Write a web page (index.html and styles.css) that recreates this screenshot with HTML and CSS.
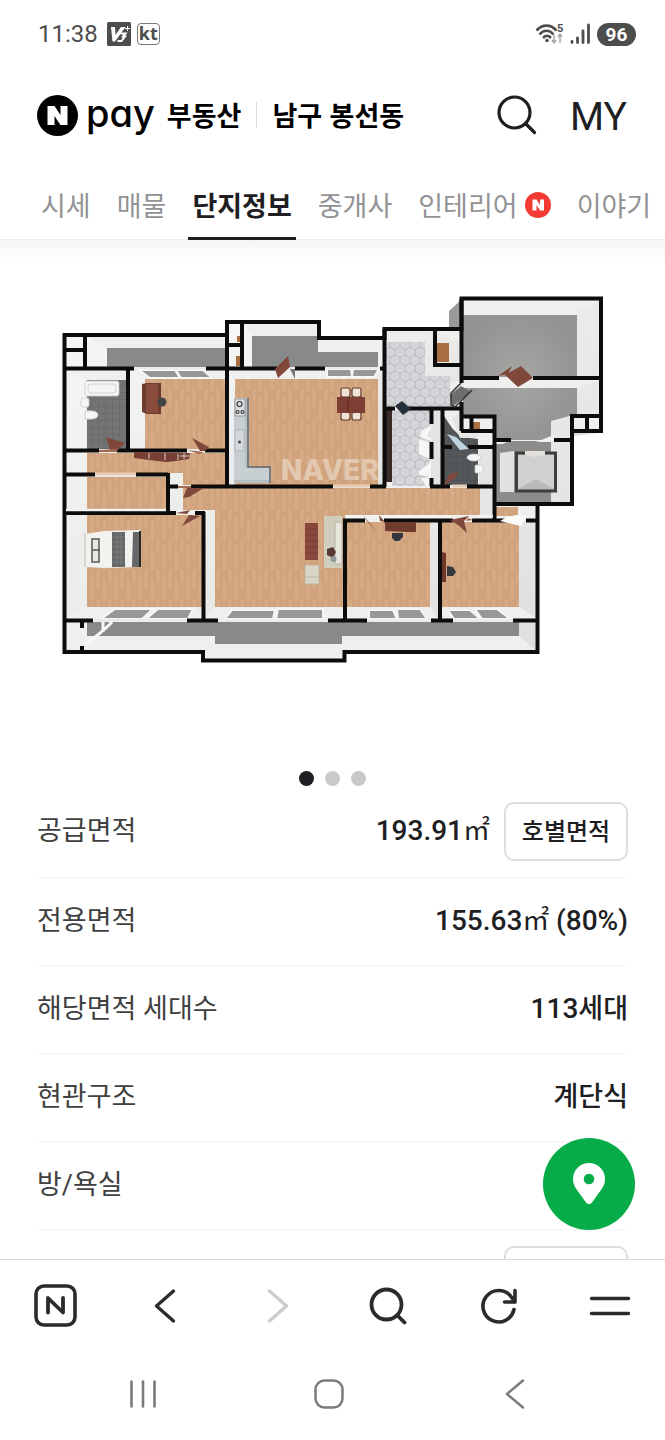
FILE: index.html
```html
<!DOCTYPE html>
<html lang="ko">
<head>
  <meta charset="UTF-8">
  <meta name="viewport" content="width=device-width, initial-scale=1.0">
  <title>Npay 부동산 - 남구 봉선동</title>
  <link rel="stylesheet" href="styles.css">
</head>
<body>
<div class="status-bar">
  <span class="clock">11:38</span>
  <svg class="app-icon" width="24" height="24" viewBox="0 0 24 24" aria-hidden="true">
    <rect width="24" height="24" rx="1.500" fill="#4d4d4d"/>
    <path d="M4 5h4l.5 8L14 5h4.500L8 19.500H5.500z" fill="#fff"/>
    <path d="M13.500 11.500h5L16 14.500h2l-3.500 4.500H10.500" fill="none" stroke="#fff" stroke-width="2"/>
    <path d="M20.500 4v5M18 6.500h5" stroke="#fff" stroke-width="1"/>
  </svg>
  <span class="carrier">kt</span>
  <div class="status-right">
    <svg width="30" height="28" viewBox="0 -2 30 28" aria-hidden="true">
      <g fill="none" stroke="#4d4d4d" stroke-width="2.600">
        <path d="M1.500 8.500c6-6.500 14-6.500 20 0M4.500 12.500c4-5 10-5 14 0M8 16c3-3 5-3 8 0"/>
      </g>
      <circle cx="12" cy="18.500" r="1.800" fill="#4d4d4d"/>
      <path d="M19 13v7M17 18l2 3 2-3M25 21v-8M23 15l2-3 2 3" fill="none" stroke="#aaa" stroke-width="1.500"/>
      <text x="22" y="10" class="wifi-gen">5</text>
    </svg>
    <svg class="signal" width="20" height="24" viewBox="0 0 20 24" aria-hidden="true">
      <path d="M2 19.500v1M7.500 16v4.500M13 9v11.500M18.500 3v17.500" stroke="#4d4d4d" stroke-width="2.800" stroke-linecap="round"/>
    </svg>
    <span class="battery">96</span>
  </div>
</div>

<header class="header">
  <a class="logo" href="#">
    <svg width="41" height="41" viewBox="0 0 41 41" aria-hidden="true">
      <circle cx="20.500" cy="20.500" r="20.500" fill="#000"/>
      <path d="M10.500 11h7l6 9v-9h7v19h-7l-6-9v9h-7z" fill="#fff"/>
    </svg>
    <span class="logo-pay">pay</span>
    <span class="logo-name">부동산</span>
  </a>
  <a class="region" href="#">남구 봉선동</a>
  <button class="icon-button header-search" type="button" aria-label="검색">
    <svg width="40" height="40" viewBox="0 0 40 40" fill="none" stroke="#1e1e23" stroke-width="3.200" stroke-linecap="round">
      <circle cx="17.500" cy="17.500" r="15.500"/>
      <path d="M28.500 28.500l9 9"/>
    </svg>
  </button>
  <a class="my" href="#">MY</a>
</header>

<nav class="tabs">
  <a href="#">시세</a>
  <a href="#">매물</a>
  <a href="#" class="active">단지정보</a>
  <a href="#">중개사</a>
  <a href="#">인테리어
    <svg class="new-badge" width="26" height="26" viewBox="0 0 26 26" aria-hidden="true">
      <circle cx="13" cy="13" r="13" fill="#f23a32"/>
      <path d="M7.500 7.500h4l3.500 5.500V7.500h4v11h-4L11.500 13v5.500h-4z" fill="#fff"/>
    </svg>
  </a>
  <a href="#">이야기</a>
</nav>

<div class="content-wrap">
<main class="content">
  <svg class="floor-plan" viewBox="0 240 665 524" role="img" aria-label="평면도">
    <defs>
      <pattern id="wood" width="24" height="30" patternUnits="userSpaceOnUse">
        <rect width="24" height="30" fill="#d1a47d"/>
        <path d="M2 0v18M8 10v20M14 0v12M20 6v24" stroke="#d6ab85" stroke-width="3"/>
        <path d="M5 4v20M11 0v9M17 14v16M23 0v20" stroke="#caa078" stroke-width="0.800"/>
      </pattern>
      <pattern id="hex" width="10" height="16" patternUnits="userSpaceOnUse">
        <rect width="10" height="16" fill="#d3d5d8"/>
        <path d="M5 0v3L0 6v5l5 3v2M5 3l5 3v5l-5 3" fill="none" stroke="#b3b6ba" stroke-width="0.900"/>
      </pattern>
      <pattern id="tile" width="7" height="7" patternUnits="userSpaceOnUse">
        <rect width="7" height="7" fill="#727476"/>
        <path d="M0 0h7M0 0v7" stroke="#626466" stroke-width="1"/>
      </pattern>
      <pattern id="darkTile" width="6" height="6" patternUnits="userSpaceOnUse">
        <rect width="6" height="6" fill="#54585a"/>
        <path d="M0 0h6M0 0v6" stroke="#484c4e" stroke-width="1"/>
      </pattern>
      <linearGradient id="wall" x1="0" y1="0" x2="1" y2="1">
        <stop offset="0" stop-color="#f7f7f6"/>
        <stop offset="1" stop-color="#dededc"/>
      </linearGradient>
      <radialGradient id="concrete">
        <stop offset="0" stop-color="#a6a6a4"/>
        <stop offset="1" stop-color="#949492"/>
      </radialGradient>
      <clipPath id="kitchenClip"><rect x="229" y="370" width="154" height="115"/></clipPath>
    </defs>

    <!-- 벽 안쪽 면 -->
    <path d="M64 335H227V322H319V338H384V329H461V299H601V431H572V504H537V652H345V660H203V652H64Z" fill="#efefed"/>
    <path d="M461 300L449 311V329H461Z" fill="#9a9a98"/>
    <path d="M572 433H598L574 436V440Z" fill="#ddd"/>
    <g fill="url(#wall)">
      <path d="M66 337h18v12H66zM66 352h18v15H66zM87 337L107 348V366H87zM66 370L87 380V448H66zM130 370l15 9v70h-15zM66 453h21v20H66zM66 477h21v32H66zM66 515h21v92l-21 11zM205 510h10v97l-10 8zM170 473h13v37h-13zM430 521h8v97l-8-11zM519 521h17v97l-17-11zM480 488h12v27h-12zM577 312l23-11v76h-23zM577 388l23-8v35h-23zM550 420l22-6v24h-22zM551 442h19v60h-19zM519 622h16v28l-16-14z"/>
      <path d="M229 324h12v19h-12zM229 347h12v20h-12zM244 324l8 12v31h-8zM229 370l6 9v105h-6zM378 379l5-8v115h-5zM386 331h48v11h-48zM425 342h10v24h25v13l-10 6v-9h-25zM437 331l13 10h10v21h-23z"/>
    </g>

    <!-- 회색 바닥 -->
    <g fill="#88898a">
      <path d="M107 348H225V367H107zM252 336H318V352H378V367H252z"/>
      <path d="M87 622h18v14H87zM105 622H519V636H342V644H215V636H105z"/>
    </g>
    <path d="M463 315H577V377H463zM463 388H577V414L551 421V440H496V415H463z" fill="url(#concrete)"/>
    <path d="M496 441H551V502H496z" fill="#8c8d8b"/>
    <path d="M463 380H600L577 388H490L506 377Z" fill="#efefed"/>

    <!-- 마루 -->
    <g fill="url(#wood)">
      <path d="M145 379H225V449H145zM87 453H225V485H183V473H168V474H87zM87 477H166V510H87zM87 515H202V607H87z"/>
      <path d="M183 488H480V515H345V607H215V510H183zM347 522H430V607H347zM442 522H519V607H442zM235 379H378V485H235z"/>
      <path d="M496 507H518V516H496z"/>
    </g>
    <path d="M436 343h13v19h-13zM473 422h7v7h-7zM237 336h4v6h-4zM236 356h5v10h-5z" fill="#a96f43"/>

    <!-- 타일 바닥 -->
    <path d="M87 380H126V449H87z" fill="url(#tile)"/>
    <path d="M386 342H425V376H450V407H386zM392 410H430V486H392z" fill="url(#hex)"/>
    <path d="M444 416l8 12 9 9 17 2v46h-34z" fill="url(#darkTile)"/>
    <path d="M431 410h11v76h-11z" fill="#e3e3e1"/>
    <path d="M386 410h6v72h-6z" fill="#3a2a28"/>
    <path d="M479 448h14v37h-14zM452 418l8-6v22h18v4h-18z" fill="#e4e4e2"/>
    <path d="M421 431l11-6-4 10 4 6-12-4zM419 439l12 4v16l-12-5zM419 471l12-9v15l-12-2zM421 478l10-1v9h-5z" fill="#f6f6f5"/>

    <!-- 창호 -->
    <g stroke="#f6f6f6" stroke-width="2" fill="#969798">
      <path d="M139 370h36l5 8h-30zM176 370h27l9 8h-31zM327 369h24l1 8h-25zM353 369h26l-5 8h-22z"/>
      <path d="M115 609h38l-11 10h-41zM158 609h35l-5 10h-42zM232 610h43l-2 9h-48zM278 609h45v10h-47zM369 610h24l4 9h-28zM397 609h23l7 10h-29zM448 610h22l10 9h-26zM475 609h22l13 10h-28z"/>
    </g>
    <path d="M85 645c8-7 18-13 27-23M103 622v10" fill="none" stroke="#f8f8f6" stroke-width="3"/>

    <!-- 엘리베이터 -->
    <path d="M500 453l14-2v41h-14z" fill="#e2e2e0"/>
    <path d="M516.500 453H555.500V491H516.500z" fill="#b9b9b7" stroke="#3d3e3d" stroke-width="3"/>
    <path d="M518 455h18v24l-18 10zM536 455h18v34l-18-10z" fill="#d0d0ce"/>
    <path d="M525 451h20v4l-10 2-10-2z" fill="#e3dfda"/>
    <path d="M536 442l18-7v7zM496 441h15l-9 3h-6z" fill="#f1f1ef"/>

    <!-- 외벽, 내벽 -->
    <g fill="none" stroke="#0c0c0c" stroke-width="4">
      <path d="M64.500 335H227V322H319V338H384.500V329H461.500V298.500H601V431H572V504H494M537.500 504V652H344.500V660.500H203V652H64.500V333"/>
      <path d="M64 350H85M85 335V368M64 368.500H134M206 368.500H227M128 368V450M227 322V486M64 450.500H99M117 450.500H187M205 450.500H227"/>
      <path d="M64 474.500H95M136 474.500H168M168 473V512M64 513H176M195 513H205M203.500 512V620M168 486.500H178M191 486.500H333M370 486.500H386"/>
      <path d="M227 345H242M242 322V368M227 368.500H277M295 368.500H325M380 368.500H386M384.500 329V487"/>
      <path d="M435 329V365H461M461.500 299V383M461.500 402V431M384 408.500H395M408 408.500H462M461 378H499M533 378H601"/>
      <path d="M461 416.500H494.500V520M461 431H494M471.500 416V431M572 431V416H601M587 416V431M494 440H511M554 440H572"/>
      <path d="M431.500 408V424M431.500 442V459M431.500 478V486M442.500 408V486M443 447H452M468 447H494M430 486.500H450M467 486.500H494"/>
      <path d="M345 620V520.500H365M384 520.500H453M472 520.500H507M526 520.500H538M440 520V620"/>
      <path d="M64 620.500H93M187 620.500H218M328 620.500H367M431 620.500H453M513 620.500H538M82 620V628M82 646V652"/>
    </g>
    <path d="M95 474h41M334 486h36M452 486h15" stroke="#e7cdb6" stroke-width="3"/>
    <path d="M94 620h93M218 620.500h110M367 620.500h64M453 620.500h60M134 368h72M325 368h55" stroke="#e9e9e9" stroke-width="2"/>
    <path d="M345 516.500h108M477 516h16M66 510h100" stroke="#f3f3f1" stroke-width="2.500"/>
    <path d="M500 521l7-4 10-2 10 1-6 10z" fill="#fbfbfa"/>

    <!-- 문 -->
    <g fill="#80483a">
      <path d="M106 437l19 6-8 8-7-1zM192 438l17 9-4 4h-5l-4-7zM275 369l13-13 2 11-12 11zM505 375l16-9 12 12-15 9zM498 376l14-10-4 8zM183 498l4-10h17l-15 9zM182 526l7-11 11 1zM176 513l14-3-3 4zM363 515l14 17-10-11zM379 515l6 7-5-1zM450 520l19-4-5 5 3 12-9-8zM444 485l5-11 10-2-4 6z"/>
      <path d="M99 450l18-1v3H99zM187 450l17 2-5 2zM178 486h13v2h-13zM468 518l5 2-7 1z" fill="#a36a52"/>
    </g>
    <path d="M450 395l11-9 10 6-19 15z" fill="#6c6d6c"/>
    <path d="M451 393l10-10M451 393v12l4 2 17-17" fill="none" stroke="#333" stroke-width="1.500"/>
    <path d="M447 434l9 3 13 12-9 1z" fill="#bed5e1"/>
    <path d="M395 406l7-5 9 8-8 6z" fill="#27303d"/>
    <path d="M290 369h5v10z" fill="#777"/>

    <!-- 욕실 -->
    <g fill="#f4f5f5" stroke="#c9cbcc" stroke-width="0.800">
      <rect x="85" y="381" width="34" height="15" rx="2"/>
      <rect x="88" y="384" width="28" height="9" rx="3"/>
      <rect x="81" y="398" width="8" height="9" rx="2"/>
      <path d="M85 411q13-1 13 4t-13 4z"/>
      <ellipse cx="474" cy="457.500" rx="7" ry="3.500"/>
      <rect x="475" y="465" width="8" height="8" rx="1"/>
    </g>

    <!-- 가구 -->
    <path d="M142 384l5-1h14v31h-14l-5-2z" fill="#703b30"/>
    <path d="M146 384h12v29h-12z" fill="#884b3c"/>
    <circle cx="162" cy="402" r="4.500" fill="#414447"/>
    <path d="M134 452l56 1-1 6-13 2-9 1-10-1-23-3z" fill="#783f34"/>
    <path d="M149 453v6M165 453v7M178 454v6M180 456h9M184 453v6" stroke="#d8d0cb" stroke-width="1"/>
    <path d="M234 398h15v69h22v16h-37z" fill="#b5bec3"/>
    <path d="M234 398h11v70h24v12h-35z" fill="#c7cfd3"/>
    <path d="M248 398v69h22v16" fill="none" stroke="#626769" stroke-width="1.500"/>
    <rect x="235" y="399" width="10" height="17" fill="#dcdedf" stroke="#8a8c8d" stroke-width="0.800"/>
    <g fill="none" stroke="#3b3b3b" stroke-width="1.200">
      <circle cx="239.500" cy="404" r="2.500"/><circle cx="237.500" cy="412" r="1.500"/><circle cx="242.500" cy="412" r="1.500"/>
    </g>
    <path d="M235 430h9v21h-9z" fill="#d5d9dc" stroke="#a9b0b4" stroke-width="0.800"/>
    <circle cx="239.500" cy="442" r="1.500" fill="#444"/>
    <g fill="#eee4d5" stroke="#5f392c" stroke-width="1.200">
      <rect x="341" y="388" width="9" height="9" rx="2"/><rect x="352" y="388" width="9" height="9" rx="2"/>
      <rect x="341" y="412" width="9" height="8" rx="2"/><rect x="352" y="412" width="9" height="8" rx="2"/>
    </g>
    <path d="M337 397h28v16h-28z" fill="#7d3f34"/>
    <path d="M348 397v16" stroke="#5d2b23"/>
    <path d="M305 523h13v37h-13z" fill="#88483d"/>
    <path d="M305 529h13M305 535h13M305 541h13M305 547h13M305 553h13" stroke="#733a31" stroke-width="0.800"/>
    <path d="M305 565h14v19h-14z" fill="#d9d6c8" stroke="#b9b5a6" stroke-width="0.800"/>
    <path d="M305 577h14" stroke="#b9b5a6"/>
    <path d="M324 516h18v52h-18z" fill="#cfcdbb"/>
    <rect x="335" y="522" width="7" height="42" rx="2" fill="#e8e6dc" stroke="#aaa89b" stroke-width="0.800"/>
    <path d="M327 549l6-2 3 5-3 6-6-3z" fill="#593832"/>
    <circle cx="333.500" cy="559" r="3" fill="#8a9898"/>

    <path d="M85 534l19-3 36-1v37l-36 1-19-1z" fill="#f2f2ef"/>
    <path d="M112 532h13v35h-13zM133 532h7v35h-8z" fill="#656769"/>
    <path d="M112 537h13M112 542h13M112 547h13M112 552h13M112 557h13M112 562h13M117 532v35M121 532v35" stroke="#818385" stroke-width="0.700"/>
    <path d="M140 531v36" stroke="#26282a" stroke-width="2"/>
    <path d="M92 539h7v23h-7zM92 550h8" fill="#e8e8e5" stroke="#55585a" stroke-width="1.500"/>
    <path d="M85 533v34" stroke="#cfcfca" stroke-width="1.500"/>

    <path d="M385 522h31v10h-10l-21-1z" fill="#713b2e"/>
    <path d="M392 533h11v4l-4 4h-4l-3-3z" fill="#33363a"/>
    <path d="M442 552l4 1v29h-4z" fill="#703629"/>
    <path d="M447 566l6 1 3 5-3 4h-6z" fill="#35383c"/>
    <text class="watermark" x="281" y="480" clip-path="url(#kitchenClip)">NAVER</text>
  </svg>

  <div class="dots">
    <button type="button" class="on" aria-label="1번 이미지"></button>
    <button type="button" aria-label="2번 이미지"></button>
    <button type="button" aria-label="3번 이미지"></button>
  </div>

  <dl class="info">
    <div class="info-row">
      <dt>공급면적</dt>
      <dd><span class="value"><span class="num">193.91</span><span class="unit">㎡</span></span> <button class="area-button" type="button">호별면적</button></dd>
    </div>
    <div class="info-row">
      <dt>전용면적</dt>
      <dd><span class="value"><span class="num">155.63</span><span class="unit">㎡</span> <span class="num">(80%)</span></span></dd>
    </div>
    <div class="info-row">
      <dt>해당면적 세대수</dt>
      <dd><span class="value"><span class="num">113</span>세대</span></dd>
    </div>
    <div class="info-row">
      <dt>현관구조</dt>
      <dd><span class="value">계단식</span></dd>
    </div>
    <div class="info-row">
      <dt>방/욕실</dt>
      <dd></dd>
    </div>
    <div class="info-row">
      <dt></dt>
      <dd><button class="area-button" type="button" aria-label="더보기"></button></dd>
    </div>
  </dl>
</main>
<button class="map-button" type="button" aria-label="지도">
  <svg width="34" height="44" viewBox="0 0 34 44">
    <path d="M17 1C8 1 1 8 1 17c0 5 2 8 4 11l9 12.500q3 3.500 6 0L29 28c2-3 4-6 4-11C33 8 26 1 17 1z" fill="#fff"/>
    <circle cx="17" cy="17" r="5.300" fill="#06ac48"/>
  </svg>
</button>
</div>

<nav class="toolbar">
  <button class="icon-button" type="button" aria-label="네이버 홈">
    <svg width="43" height="43" viewBox="0 0 43 43" fill="none" stroke="#2b2b2b" stroke-linecap="round" stroke-linejoin="round">
      <rect x="2" y="2" width="39" height="39" rx="8" stroke-width="3.600"/>
      <path d="M14 28.500V14l15 14.500V14" stroke-width="3.800"/>
    </svg>
  </button>
  <button class="icon-button" type="button" aria-label="뒤로">
    <svg width="24" height="36" viewBox="0 0 24 36" fill="none" stroke="#2b2b2b" stroke-width="3.400" stroke-linecap="round" stroke-linejoin="round">
      <path d="M19.500 3L2.500 18l17 15"/>
    </svg>
  </button>
  <button class="icon-button" type="button" aria-label="앞으로" disabled>
    <svg width="24" height="36" viewBox="0 0 24 36" fill="none" stroke="#cccccc" stroke-width="3.400" stroke-linecap="round" stroke-linejoin="round">
      <path d="M4.500 3l17 15-17 15"/>
    </svg>
  </button>
  <button class="icon-button" type="button" aria-label="검색">
    <svg width="38" height="38" viewBox="0 0 38 38" fill="none" stroke="#2b2b2b" stroke-width="3.800" stroke-linecap="round">
      <circle cx="17.500" cy="17.500" r="15"/>
      <path d="M28.500 28.500l7 7"/>
    </svg>
  </button>
  <button class="icon-button" type="button" aria-label="새로고침">
    <svg width="36" height="38" viewBox="0 0 36 38" fill="none" stroke="#2b2b2b" stroke-width="3.600" stroke-linecap="round" stroke-linejoin="round">
      <path d="M33 22.500A15.700 15.700 0 1 1 30 9.500L34 15M34 3.500V15H23.500"/>
    </svg>
  </button>
  <button class="icon-button" type="button" aria-label="메뉴">
    <svg width="42" height="20" viewBox="0 0 42 20" stroke="#2b2b2b" stroke-width="3.400" stroke-linecap="round">
      <path d="M2.500 2.500h37M2.500 17.500h37"/>
    </svg>
  </button>
</nav>

<nav class="system-nav">
  <button class="icon-button" type="button" aria-label="최근 앱">
    <svg width="28" height="30" viewBox="0 0 28 30" stroke="#7b7b7b" stroke-width="2.600" stroke-linecap="round">
      <path d="M2.500 2.500v25M14 2.500v25M25.500 2.500v25"/>
    </svg>
  </button>
  <button class="icon-button" type="button" aria-label="홈">
    <svg width="30" height="30" viewBox="0 0 30 30" fill="none" stroke="#7b7b7b" stroke-width="2.500">
      <rect x="1.500" y="1.500" width="27" height="27" rx="9"/>
    </svg>
  </button>
  <button class="icon-button" type="button" aria-label="뒤로 가기">
    <svg width="20" height="30" viewBox="0 0 20 30" fill="none" stroke="#7b7b7b" stroke-width="2.500" stroke-linecap="round" stroke-linejoin="round">
      <path d="M18 1.500L2 15l16 13.500"/>
    </svg>
  </button>
</nav>
</body>
</html>
```
FILE: styles.css
```css
:root {
  --text-color: #1e1e23;
  --label-color: #404040;
  --tab-color: #929294;
  --line-color: #f3f3f4;
  --button-border: #dedede;
  --green: #06ac48;
}

* {
  box-sizing: border-box;
}

body {
  display: flex;
  flex-direction: column;
  height: 100vh;
  margin: 0;
  overflow: hidden;
  background-color: #fff;
  color: var(--text-color);
  font-family: Roboto, "Noto Sans CJK KR", sans-serif;
  font-size: 27px;
}

a {
  color: inherit;
  text-decoration: none;
}

button {
  padding: 0;
  border: 0;
  background: none;
  color: inherit;
  font: inherit;
  cursor: pointer;
}

svg {
  display: block;
  flex-shrink: 0;
}

.icon-button {
  display: flex;
  align-items: center;
  justify-content: center;
}

/* 상태 표시줄 */
.status-bar {
  display: flex;
  align-items: center;
  flex-shrink: 0;
  height: 68px;
  padding: 0 29px 0 38px;
  color: #4d4d4d;
}

.clock {
  font-size: 24px;
}

.app-icon {
  margin-left: 9px;
}

.carrier {
  width: 23px;
  height: 22px;
  margin-left: 6px;
  border: 1px solid #777;
  border-radius: 4px;
  font-family: "Noto Sans", sans-serif;
  font-size: 18px;
  font-weight: 700;
  line-height: 19px;
  text-align: center;
}

.status-right {
  display: flex;
  align-items: center;
  margin-left: auto;
}

.wifi-gen {
  fill: #4d4d4d;
  font-size: 11px;
  font-weight: 700;
}

.signal {
  margin: 0 7px 0 5px;
}

.battery {
  width: 39px;
  height: 23px;
  border-radius: 12px;
  background-color: #4d4d4d;
  color: #fff;
  font-size: 19px;
  font-weight: 700;
  line-height: 24px;
  text-align: center;
}

/* 헤더 */
.header {
  display: flex;
  align-items: center;
  flex-shrink: 0;
  height: 94px;
  padding: 0 38px 0 37px;
  color: #000;
  font-family: "Noto Sans CJK KR", sans-serif;
  font-weight: 700;
}

.logo {
  display: flex;
  align-items: center;
}

.logo-pay {
  margin: 0 12px 4px 8px;
  font-family: Inter, sans-serif;
  font-size: 38px;
  font-weight: 500;
  font-feature-settings: "cv11";
}

.logo-name {
  margin-bottom: 2px;
}

.region {
  margin-left: 15px;
  padding-left: 15px;
  border-left: 1px solid #dedede;
  line-height: 26px;
}

.header-search {
  margin-left: auto;
}

.my {
  margin-left: 33px;
  padding-top: 3px;
  color: var(--text-color);
  font-family: Roboto, sans-serif;
  font-size: 39px;
  font-weight: 400;
}

/* 탭 */
.tabs {
  display: flex;
  flex-shrink: 0;
  gap: 18px;
  height: 78px;
  padding-left: 37px;
  border-bottom: 1px solid #ececec;
  color: var(--tab-color);
  font-family: "Noto Sans CJK KR", sans-serif;
  white-space: nowrap;
}

.tabs a {
  display: flex;
  align-items: center;
  gap: 7px;
  height: 79px;
  padding: 10px 4px 0;
  border-bottom: 4px solid transparent;
}

.tabs .active {
  border-bottom-color: var(--text-color);
  color: var(--text-color);
  font-weight: 700;
}

/* 본문 */
.content-wrap {
  position: relative;
  flex: 1;
  min-height: 0;
}

.content {
  height: 100%;
  overflow-y: auto;
  scrollbar-width: none;
  background: linear-gradient(#f6f6f6, #fff 26px);
}

.floor-plan {
  width: 100%;
  height: auto;
}

.watermark {
  fill: #fff;
  fill-opacity: 0.4;
  font-family: Inter, sans-serif;
  font-size: 28px;
  font-weight: 800;
}

.dots {
  display: flex;
  justify-content: center;
  gap: 11px;
  padding: 7px 0 0;
}

.dots button {
  width: 15px;
  height: 15px;
  border-radius: 50%;
  background-color: #c8c9cb;
}

.dots .on {
  background-color: var(--text-color);
}

.info {
  margin: 0 37px;
}

.info-row {
  display: flex;
  align-items: center;
  justify-content: space-between;
  min-height: 88px;
  padding: 16px 0;
  border-bottom: 1px solid var(--line-color);
}

.info-row dt,
.value {
  padding-bottom: 6px;
}

.info-row dt {
  color: var(--label-color);
}

.info-row dd {
  display: flex;
  align-items: center;
  gap: 14px;
  margin: 0;
  font-weight: 500;
}

.num {
  font-size: 28px;
}

.unit {
  font-weight: 400;
}

.area-button {
  width: 124px;
  height: 59px;
  padding-bottom: 5px;
  border: 2px solid var(--button-border);
  border-radius: 10px;
  font-size: 24px;
  font-weight: 500;
}

.map-button {
  position: absolute;
  right: 30px;
  bottom: 29px;
  display: flex;
  align-items: center;
  justify-content: center;
  width: 92px;
  height: 92px;
  border-radius: 50%;
  background-color: var(--green);
}

/* 하단 툴바 */
.toolbar {
  display: grid;
  grid-template-columns: repeat(6, 1fr);
  flex-shrink: 0;
  height: 92px;
  border-top: 1px solid #d8d8d8;
}

.system-nav {
  display: grid;
  grid-template-columns: repeat(3, 1fr);
  flex-shrink: 0;
  height: 89px;
  padding: 0 57px 4px 50px;
}
```
